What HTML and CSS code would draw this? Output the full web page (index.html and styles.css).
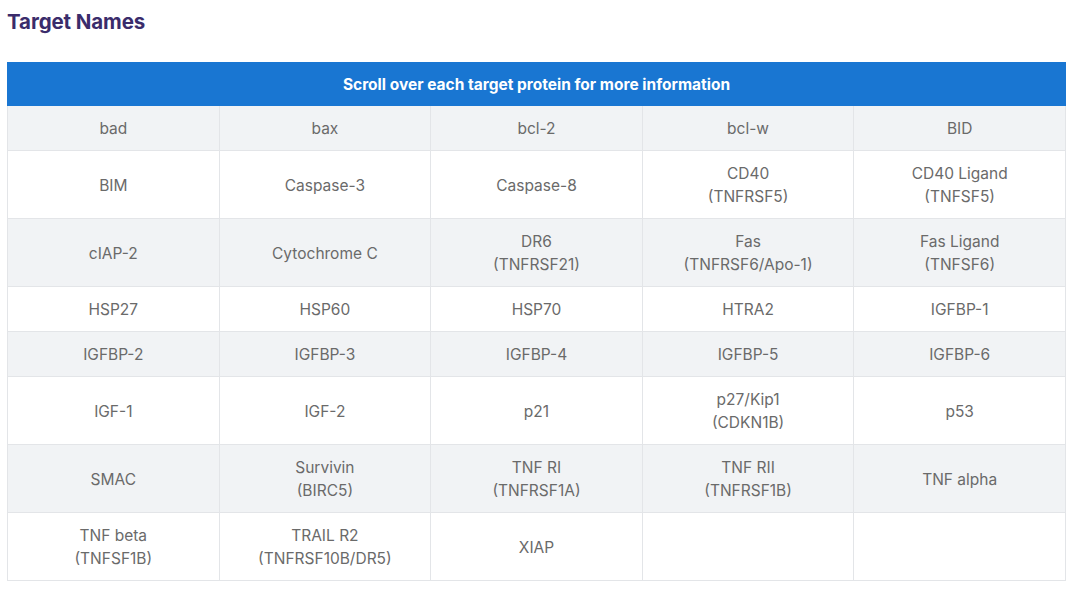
FILE: index.html
```html
<!DOCTYPE html>
<html>
<head>
<meta charset="utf-8">
<link rel="stylesheet" href="styles.css">
</head>
<body>
<h2 class="title">Target Names</h2>
<table class="targets">
<thead>
<tr><th colspan="5">Scroll over each target protein for more information</th></tr>
</thead>
<tbody>
<tr><td>bad</td><td>bax</td><td>bcl-2</td><td>bcl-w</td><td>BID</td></tr>
<tr><td>BIM</td><td>Caspase-3</td><td>Caspase-8</td><td>CD40<br>(TNFRSF5)</td><td>CD40 Ligand<br>(TNFSF5)</td></tr>
<tr><td>cIAP-2</td><td>Cytochrome C</td><td>DR6<br>(TNFRSF21)</td><td>Fas<br>(TNFRSF6/Apo-1)</td><td>Fas Ligand<br>(TNFSF6)</td></tr>
<tr><td>HSP27</td><td>HSP60</td><td>HSP70</td><td>HTRA2</td><td>IGFBP-1</td></tr>
<tr><td>IGFBP-2</td><td>IGFBP-3</td><td>IGFBP-4</td><td>IGFBP-5</td><td>IGFBP-6</td></tr>
<tr><td>IGF-1</td><td>IGF-2</td><td>p21</td><td>p27/Kip1<br>(CDKN1B)</td><td>p53</td></tr>
<tr><td>SMAC</td><td>Survivin<br>(BIRC5)</td><td>TNF RI<br>(TNFRSF1A)</td><td>TNF RII<br>(TNFRSF1B)</td><td>TNF alpha</td></tr>
<tr><td>TNF beta<br>(TNFSF1B)</td><td>TRAIL R2<br>(TNFRSF10B/DR5)</td><td>XIAP</td><td></td><td></td></tr>
</tbody>
</table>
</body>
</html>
```
FILE: styles.css
```css
html, body {
  margin: 0;
  padding: 0;
  background: #ffffff;
}
body {
  padding: 0 14px 0 7px;
  font-family: Inter, "Noto Sans", sans-serif;
}
.title {
  margin: 0;
  padding-top: 9px;
  height: 62px;
  box-sizing: border-box;
  font-size: 20.5px;
  font-weight: 700;
  line-height: 26px;
  color: #3a2c6b;
  letter-spacing: -0.1px;
}
.targets {
  width: 1059px;
  border-collapse: collapse;
  table-layout: fixed;
}
.targets th {
  background: #1976d2;
  color: #ffffff;
  font-size: 15.5px;
  font-weight: 700;
  height: 42px;
  padding: 0;
  text-align: center;
  border: 1px solid #1976d2;
}
.targets td {
  border: 1px solid #e3e5e8;
  text-align: center;
  vertical-align: middle;
  font-size: 15.5px;
  line-height: 23px;
  color: #6a6a6a;
  padding: 11px 6px 10px;
  height: 23px;
}
.targets tbody tr:nth-child(odd) td {
  background: #f1f3f5;
}
```
